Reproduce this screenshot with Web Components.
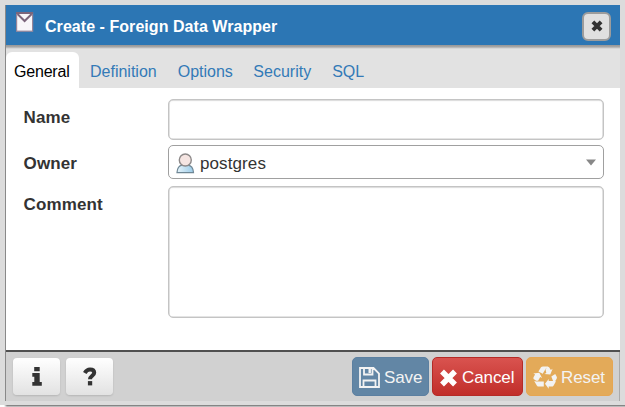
<!DOCTYPE html>
<html lang="en"><head><meta charset="utf-8"><title>Create - Foreign Data Wrapper</title>
<style>
html,body{margin:0;height:100%;overflow:hidden;background:#dcdcdc}
body{font-family:"Liberation Sans",Arial,sans-serif;font-size:17px}
</style></head><body>
<wrapper-dialog></wrapper-dialog>
<script>
const define=(name,html)=>customElements.define(name,class extends HTMLElement{
  constructor(){super();this.attachShadow({mode:'open'}).innerHTML=html;}
});

define('dialog-header',`<style>
:host{display:flex;box-sizing:border-box;height:40px;background:#2c76b4;color:#fff;padding:0 9px 0 10px;align-items:center}
.t{font-weight:700;font-size:16px;margin-left:11px;padding-top:3px;flex:1;white-space:nowrap;letter-spacing:.05px}
.i{width:18px;height:20px;margin-bottom:6px}
button{box-sizing:border-box;width:29px;height:29px;border:2px solid #9c9c9c;border-radius:6px;background:#e0e0e0;padding:0;display:grid;place-items:center;margin-top:2px}
</style>
<svg class="i" viewBox="0 0 18 20"><rect x=".6" y=".8" width="16" height="18.4" fill="#f8f7fa" stroke="#978699" stroke-width="1.2"/><path d="M0 1h17M1.500 2l7.100 7L15.700 2" fill="none" stroke="#7b667c" stroke-width="2"/></svg>
<span class="t"><slot></slot></span>
<button aria-label="Close"><svg width="12" height="12" viewBox="0 0 12 12"><path d="M1.900 1.900l8.200 8.200M10.100 1.900L1.900 10.100" stroke="#333" stroke-width="3.900"/></svg></button>`);

define('tab-strip',`<style>
:host{display:flex;box-sizing:border-box;height:43px;padding-top:7px;background:linear-gradient(#969696 0,#a8a8a8 2px,#cacaca 3px,#e2e2e2 4px,#e2e2e2);color:#337ab7;font-size:16px}
</style><slot></slot>`);

define('tab-item',`<style>
:host{display:block;box-sizing:border-box;height:36px;padding:10px 0 0 11px;line-height:19px;white-space:nowrap}
:host([active]){width:73px;background:#fff;color:#000;border-radius:6px 6px 0 0;padding-left:8px;letter-spacing:-.2px}
</style><slot></slot>`);

define('form-row',`<style>
:host{display:grid;grid-template-columns:145px 436px;color:#333}
.l{font-weight:700;line-height:20px;padding:9px 0 0 .6px;letter-spacing:.1px}
</style><span class="l"><slot name="label"></slot></span><slot></slot>`);

define('text-box',`<style>
:host{display:block;box-sizing:border-box;height:41px;border:1px solid #c4c4c4;border-radius:5px;background:#fff;box-shadow:inset 0 0 0 .5px #c9c9c9,inset 0 1px 2px #0001}
:host([multiline]){height:132px}
</style>`);

define('select-box',`<style>
:host{display:flex;align-items:center;box-sizing:border-box;height:34px;border:1px solid #a0a0a0;border-radius:5px;background:#fff;padding:0 7px;color:#333}
span{flex:1;margin-left:5px;padding-top:4px;line-height:20px;letter-spacing:.1px}
.u{margin-top:2px}
</style>
<svg class="u" width="19" height="21" viewBox="0 0 19 21"><defs><linearGradient id="g" x2="1"><stop stop-color="#e6f4fb"/><stop offset="1" stop-color="#9bcbe8"/></linearGradient></defs>
<path d="M1 19.600C1.300 15.500 3.600 12.600 6 12.200h6c3 .4 5.200 3.300 5.500 7.400z" fill="url(#g)" stroke="#6f8795" stroke-width="1.200"/>
<circle cx="9.300" cy="7" r="6" fill="#f5e5e2" stroke="#8d8989" stroke-width="1.400"/></svg>
<span><slot></slot></span><svg width="10" height="7" viewBox="0 0 10 7"><path d="M0 .5h10L5 6.500z" fill="#888"/></svg>`);

define('tool-button',`<style>
:host{display:grid;place-items:center;box-sizing:border-box;width:47px;height:37px;border-radius:4px;background:linear-gradient(#fff,#e2e2e2);box-shadow:0 1px 2px #0002;color:#333}
</style><slot></slot>`);

define('action-button',`<style>
:host{display:flex;align-items:center;box-sizing:border-box;height:39px;border-radius:5px;border:1px solid;padding:2px 0 0 6px;color:#f3f3f3;white-space:nowrap;line-height:20px}
:host([kind=save]){width:77px;background:#6286a5;border-color:#5c80a1}
:host([kind=cancel]){width:91px;background:linear-gradient(#d9534f,#c12e2a);border-color:#b52b27;color:#fff}
:host([kind=reset]){width:87px;background:#e3aa59;border-color:#e6a652}
::slotted(svg){margin-right:4px;flex:none}
:host([kind]){letter-spacing:-.1px}
</style><slot></slot>`);

define('dialog-footer',`<style>
:host{display:flex;box-sizing:border-box;height:51px;border-top:2px solid #505050;background:linear-gradient(#aaa,#aaa) right/1px 100% no-repeat #d1d1d1;padding:5px 7px 0}
.sp{flex:1}
tool-button{margin:1px 6px 0 0}
action-button+action-button{margin-left:3px}
</style>
<tool-button><svg width="10" height="19" viewBox="0 0 10 19"><path d="M2.200 0h5.500v4.200H2.200zM.3 6h7.400V15H9.800V18.700H.3V15h2V9.700h-2z" fill="#333"/></svg></tool-button>
<tool-button><svg width="14" height="19" viewBox="0 0 14 19"><path d="M1.800 6C3.200 3.500 4.800 2.500 7 2.500c2.800 0 4.200 1.300 4.200 3.200 0 3-4.200 3.100-4.200 6.600" fill="none" stroke="#333" stroke-width="4"/><path d="M4.900 14.100h4.300v4.300H4.900z" fill="#333"/></svg></tool-button>
<span class="sp"></span>
<action-button kind="save"><svg width="21" height="21" viewBox="0 0 21 21" fill="none" stroke="#f3f3f3" stroke-width="1.800"><path d="M1 1h13.500L20 6.500V20H1zM4.500 20v-6.500h12V20M5 1v6.500h8.500V1"/><path d="M10.700 2v4" stroke-width="2.400"/></svg>Save</action-button>
<action-button kind="cancel"><svg width="19" height="18" viewBox="0 0 19 18"><path d="M3 2.500l13 13M16 2.500l-13 13" stroke="#fff" stroke-width="5.500"/></svg>Cancel</action-button>
<action-button kind="reset"><svg width="24" height="23" viewBox="0 0 24 23" fill="#f3f3f3"><path d="M5.400 5.500L8 1.200Q8.600.4 10 .4h5.200q-1.500.6-2.500 2.300L9.700 7.800zM12.600 3.500L14.300.8q1.200-.5 2 .6l1.500 2.500 1.800-1.100-2.300 5.600-6-.3 2-1.100zM18.300 10.500l3.900-2.500 1.400 2.400q.7 1.300-.1 2.600l-2.600 4.300q-.2-1.400-1-2.700zM23 15.200l-2.500 4.500q-.6.900-2 .9h-2.800v2.100L12 17.800l3.700-4.900v2.200h5q1.500 0 2.300.1zM10.800 15.400v5.200H6q-1.400 0-2.200-1.200L1.200 15q1.200.5 2.500.4zM3.200 14.700L.6 12.900q-.5-1 .2-2.100l1.300-2.200L.3 7.500l6-.8 2.800 5.400-1.900-1.100-2.100 3.700z"/></svg>Reset</action-button>`);

define('wrapper-dialog',`<style>
:host{display:block;width:625px;height:407px;box-sizing:border-box;padding:5px 5px 0;background:linear-gradient(90deg,#fff 4px,transparent 7px) 0 405px/100% 2px no-repeat,linear-gradient(#dcdcdc 404.500px,#858585 405px,#858585 406px,#bbb 406px)}
.d{display:flex;flex-direction:column;box-sizing:border-box;width:615px;height:396px;border-left:1px solid #898989;background:#fff}
.f{flex:1;display:grid;align-content:start;padding:11px 0 0 17px}
form-row{margin-bottom:5px}
form-row:nth-child(2){margin-bottom:7px}
</style>
<div class="d"><dialog-header>Create - Foreign Data Wrapper</dialog-header>
<tab-strip><tab-item active>General</tab-item><tab-item>Definition</tab-item><tab-item style="padding-left:21px">Options</tab-item><tab-item style="padding-left:20.500px">Security</tab-item><tab-item style="padding-left:21px">SQL</tab-item></tab-strip>
<div class="f"><form-row><span slot="label">Name</span><text-box></text-box></form-row>
<form-row><span slot="label">Owner</span><select-box>postgres</select-box></form-row>
<form-row><span slot="label">Comment</span><text-box multiline></text-box></form-row></div>
<dialog-footer></dialog-footer></div>`);
</script></body></html>
